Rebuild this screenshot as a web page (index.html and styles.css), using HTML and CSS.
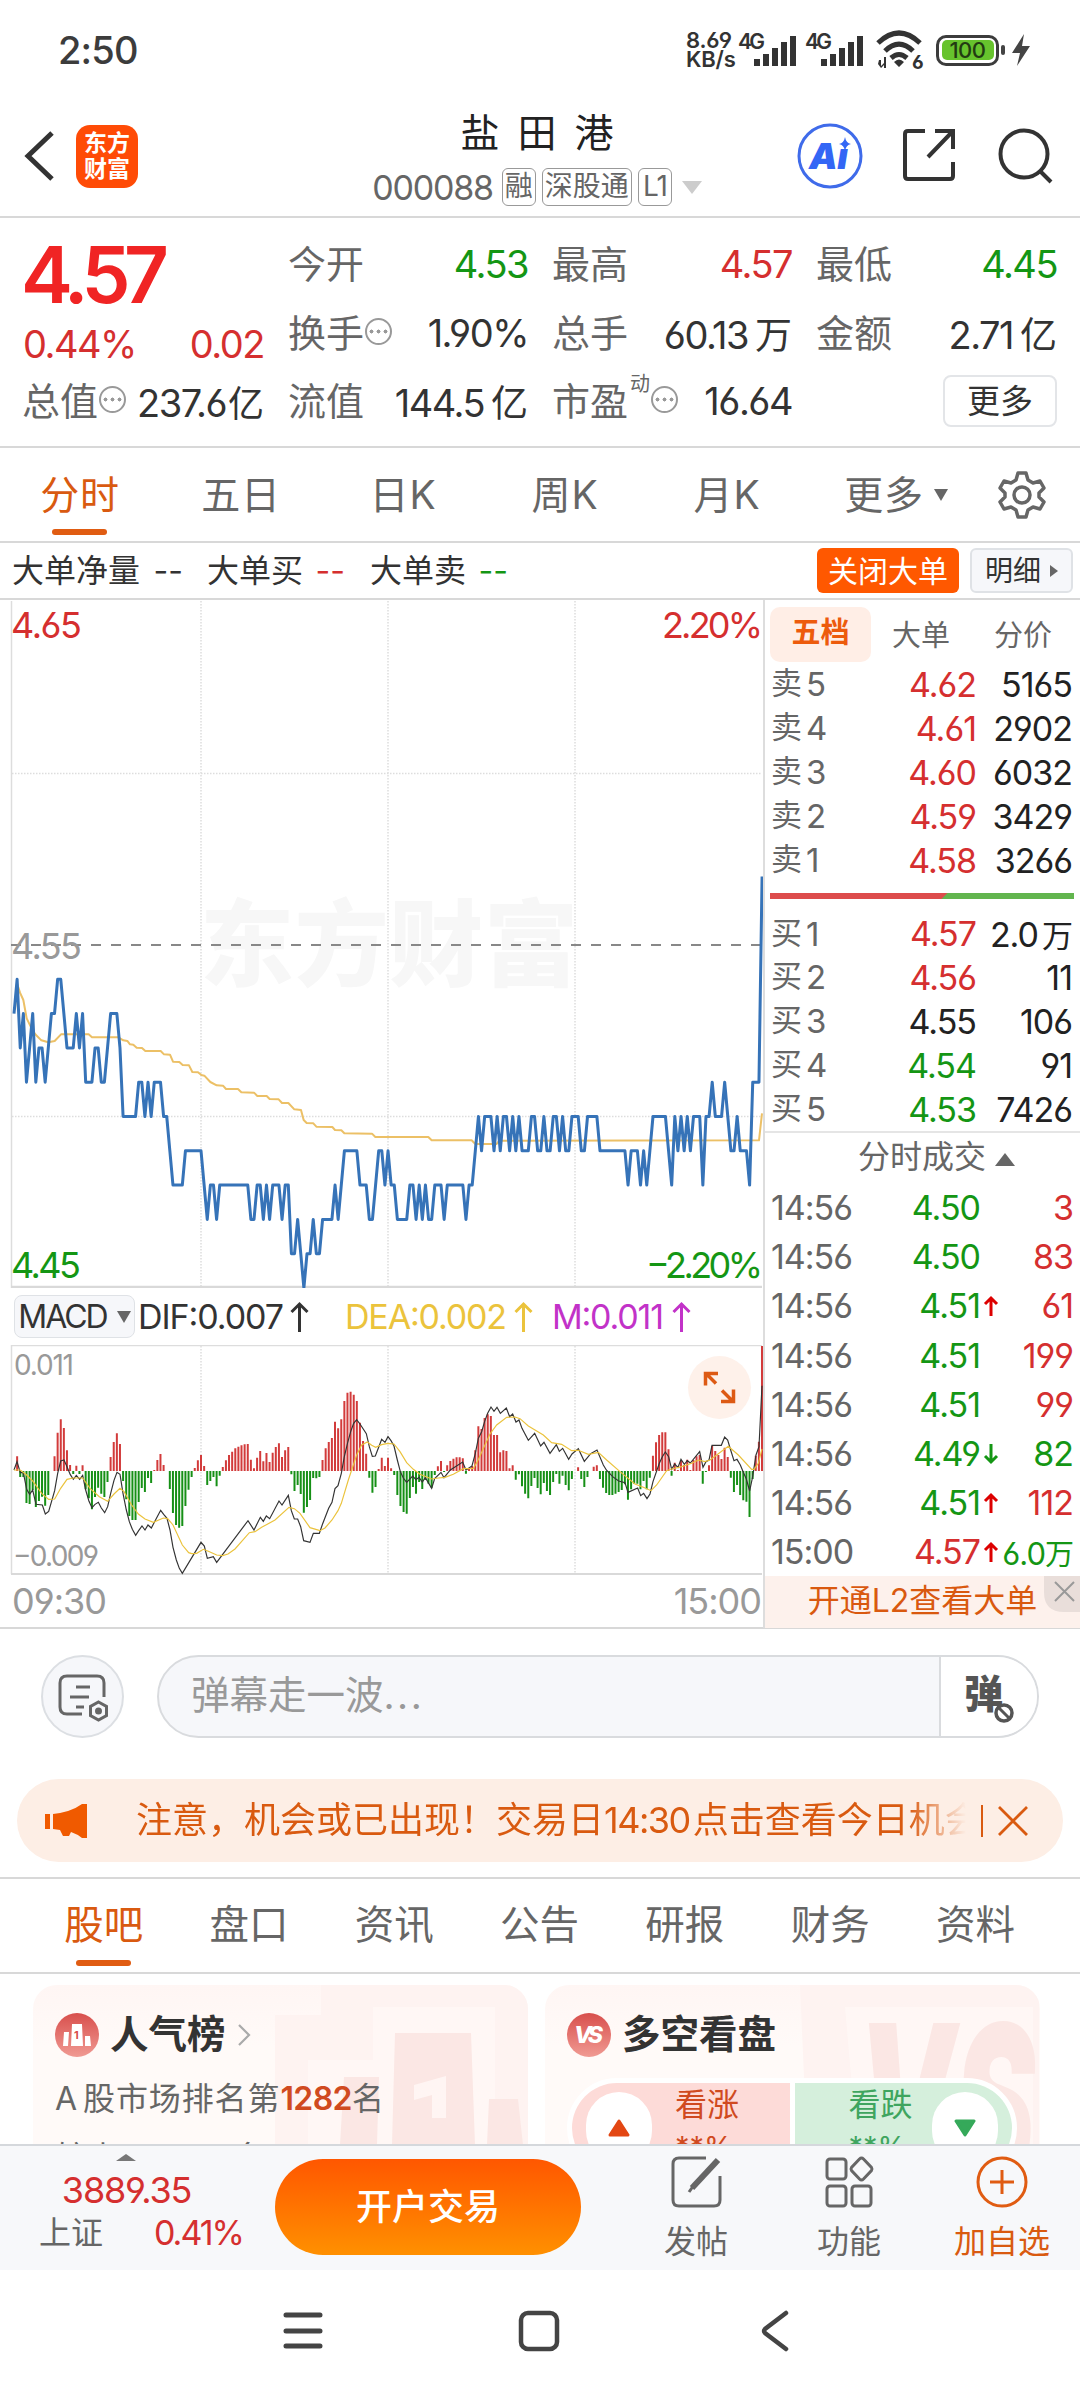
FILE: index.html
```html
<!DOCTYPE html>
<html lang="zh-CN">
<head>
<meta charset="utf-8">
<title>盐田港 000088</title>
<link rel="stylesheet" href="styles.css">
</head>
<body>
<div class="statusbar">
  <span class="clock">2:50</span>
  <div class="status-right">
    <span class="speed">8.69<br>KB/s</span>
    <svg width="62" height="42" viewBox="0 0 62 42"><text class="net" x="0" y="20" textLength="27">4G</text><path class="sig" d="M19 37v-7M28 37V25M37 37V19M46 37V13M55 37V7"/></svg>
    <svg width="64" height="42" viewBox="0 0 64 42"><text class="net" x="5" y="20" textLength="27">4G</text><path class="sig" d="M24 37v-7M33 37V25M42 37V19M51 37V13M60 37V7"/></svg>
    <svg class="wifi" width="50" height="42" viewBox="0 0 50 42"><path d="M3 14Q24-6 45 14M10 22Q24 8 38 22M16 29Q24 22 32 29" fill="none" stroke="#333" stroke-width="5"/><path d="M24 38l-5-5q5-5 10 0zM4 31h2v6l3-3v-6h2v11H9v-3l-3 3-3-4z" fill="#333"/><text class="six" x="37" y="40">6</text></svg>
    <span class="battery"><i>100</i></span><i class="bat-tip"></i>
    <svg class="bolt" width="18" height="32" viewBox="0 0 18 32"><path d="M12 0L0 19h8L5 32 18 12h-8z" fill="#444"/></svg>
  </div>
</div>

<header class="header">
  <svg class="back" width="32" height="52" viewBox="0 0 32 52"><path d="M28 3L4 26l24 23" fill="none" stroke="#333" stroke-width="5"/></svg>
  <div class="logo">东方<br>财富</div>
  <div class="title">
    <h1>盐 田 港</h1>
    <div class="code"><span>000088</span><b>融</b><b class="wide">深股通</b><b class="l1">L1</b><i class="tri"></i></div>
  </div>
  <svg class="ai" width="66" height="66" viewBox="0 0 66 66"><circle cx="33" cy="33" r="31" fill="#fff" stroke="#3f6bea" stroke-width="3"/><text x="12" y="46" textLength="39" class="ai-t">Aı</text><path d="M48 14q1 6 6 7-5 1-6 7-1-6-6-7 5-1 6-7z" fill="#3366f5"/></svg>
  <svg class="share" width="54" height="54" viewBox="0 0 54 54" fill="none" stroke="#333" stroke-width="4"><path d="M23 3H6Q3 3 3 6v42q0 3 3 3h42q3 0 3-3V34M33 3h18v18M51 3L26 29"/></svg>
  <svg class="search" width="56" height="56" viewBox="0 0 56 56" fill="none" stroke="#333" stroke-width="4"><circle cx="26" cy="26" r="23.500"/><path d="M42 43l11 11"/></svg>
</header>

<section class="quote">
  <div class="main-price"><strong>4.57</strong><div><span>0.44%</span><span>0.02</span></div></div>
  <div class="cell"><label>今开</label><span class="green">4.53</span></div>
  <div class="cell"><label>最高</label><span class="red">4.57</span></div>
  <div class="cell"><label>最低</label><span class="green">4.45</span></div>
  <div class="cell"><label>换手<i class="info"></i></label><span>1.90%</span></div>
  <div class="cell"><label>总手</label><span>60.13<em>万</em></span></div>
  <div class="cell"><label>金额</label><span>2.71<em>亿</em></span></div>
  <div class="cell"><label>总值<i class="info"></i></label><span>237.6<em class="tight">亿</em></span></div>
  <div class="cell"><label>流值</label><span>144.5<em>亿</em></span></div>
  <div class="cell"><label>市盈<sup>动</sup><i class="info"></i></label><span>16.64</span></div>
  <div class="cell end"><button class="more">更多</button></div>
</section>

<nav class="periods">
  <a class="on">分时</a><a>五日</a><a>日K</a><a>周K</a><a>月K</a><a class="drop">更多<i></i></a>
  <svg width="52" height="52" viewBox="0 0 52 52" fill="none" stroke="#666" stroke-width="3.500" stroke-linejoin="round"><path d="M22 4h8l2 7 5 3 7-2 4 7-5 5v4l5 5-4 7-7-2-5 3-2 7h-8l-2-7-5-3-7 2-4-7 5-5v-4l-5-5 4-7 7 2 5-3z"/><circle cx="26" cy="26" r="8"/></svg>
</nav>

<div class="orders">
  <span class="o1">大单净量 <i>--</i></span><span class="o2">大单买 <i class="red">--</i></span><span class="o3">大单卖 <i class="green">--</i></span>
  <button class="close-big">关闭大单</button><button class="detail">明细<i></i></button>
</div>

<main class="market">
  <div class="charts">
    <svg class="price-chart" width="763" height="688" viewBox="0 600 763 688">
      <text class="wm" x="200" y="979" textLength="378">东方财富</text>
      <path class="dots" d="M201 601V1287M388 601V1287M575 601V1287M12 773.500H762M12 1116.500H762"/>
      <path class="axis" d="M11.500 601V1288"/><path class="base" d="M11 1287H762"/>
      <path class="mid" d="M11 945H762"/>
      <text class="lab red-f" x="11" y="638" textLength="71">4.65</text><text class="lab red-f" x="662" y="638" textLength="101">2.20%</text>
      <text class="lab gray-f" x="11" y="959" textLength="71">4.55</text>
      <text class="lab green-f" x="11" y="1278" textLength="70">4.45</text><text class="lab green-f" x="646" y="1278" textLength="117">−2.20%</text>
      <g transform="translate(0 940) scale(.33333)"><polyline id="avg" class="avg"/></g>
      <g transform="translate(14 945) scale(3.117 34.3)"><polyline id="price" class="price"/></g>
    </svg>
    <div class="macd-row">
      <button class="macd">MACD<i></i></button>
      <svg width="620" height="57" viewBox="138 1288 620 57"><text class="ind" x="138" y="1329" textLength="146">DIF:0.007</text><text class="ind y-f" x="345" y="1329" textLength="162">DEA:0.002</text><text class="ind m-f" x="552" y="1329" textLength="112">M:0.011</text><g fill="none" stroke-width="3"><path stroke="#333" d="M299.500 1332v-28m-8 8l8-8 8 8"/><path stroke="#ebc33c" d="M523.500 1332v-28m-8 8l8-8 8 8"/><path stroke="#c232c8" d="M681.500 1332v-28m-8 8l8-8 8 8"/></g></svg>
    </div>
    <svg class="macd-chart" width="763" height="230" viewBox="0 1345 763 230">
      <path class="dots" d="M201 1346V1574M388 1346V1574M575 1346V1574"/>
      <path class="axis" d="M11.500 1345V1574M11 1345.500H762"/><path class="base thin" d="M11 1574H762"/>
      <text class="sm" x="14" y="1375" textLength="60">0.011</text><text class="sm" x="13" y="1566" textLength="86">−0.009</text>
      <g transform="translate(0 1280) scale(.33333)"><path id="up" class="bar up"/><path id="down" class="bar down"/><polyline id="dif" class="dif"/><polyline id="dea" class="dea"/></g>
      <circle cx="719.500" cy="1387.500" r="31.500" fill="#fef1ea"/>
      <path d="M716 1384l-10-10M718 1374h-12.500v12M722 1391l11 11M721 1402h12.500v-12" transform="translate(0 -.5)" fill="none" stroke="#dd5a14" stroke-width="3.500"/>
    </svg>
    <div class="times"><span>09:30</span><span>15:00</span></div>
  </div>
  <aside class="book">
    <div class="book-tabs"><b>五档</b><span>大单</span><span>分价</span></div>
    <div class="lv"><label>卖<u>5</u></label><span class="red">4.62</span><span>5165</span></div>
    <div class="lv"><label>卖<u>4</u></label><span class="red">4.61</span><span>2902</span></div>
    <div class="lv"><label>卖<u>3</u></label><span class="red">4.60</span><span>6032</span></div>
    <div class="lv"><label>卖<u>2</u></label><span class="red">4.59</span><span>3429</span></div>
    <div class="lv"><label>卖<u>1</u></label><span class="red">4.58</span><span>3266</span></div>
    <div class="ratio"></div>
    <div class="lv"><label>买<u>1</u></label><span class="red">4.57</span><span>2.0<em>万</em></span></div>
    <div class="lv"><label>买<u>2</u></label><span class="red">4.56</span><span>11</span></div>
    <div class="lv"><label>买<u>3</u></label><span>4.55</span><span>106</span></div>
    <div class="lv"><label>买<u>4</u></label><span class="green">4.54</span><span>91</span></div>
    <div class="lv"><label>买<u>5</u></label><span class="green">4.53</span><span>7426</span></div>
    <div class="deal-head">分时成交<i></i></div>
    <div class="deal"><time>14:56</time><span class="green">4.50</span><i></i><span class="red">3</span></div>
    <div class="deal"><time>14:56</time><span class="green">4.50</span><i></i><span class="red">83</span></div>
    <div class="deal"><time>14:56</time><span class="green">4.51</span><svg class="arr" viewBox="0 0 16 22"><path d="M8 21V3M2 9l6-6 6 6"/></svg><span class="red">61</span></div>
    <div class="deal"><time>14:56</time><span class="green">4.51</span><i></i><span class="red">199</span></div>
    <div class="deal"><time>14:56</time><span class="green">4.51</span><i></i><span class="red">99</span></div>
    <div class="deal"><time>14:56</time><span class="green">4.49</span><svg class="arr dn" viewBox="0 0 16 22"><path d="M8 1v18M2 13l6 6 6-6"/></svg><span class="green">82</span></div>
    <div class="deal"><time>14:56</time><span class="green">4.51</span><svg class="arr" viewBox="0 0 16 22"><path d="M8 21V3M2 9l6-6 6 6"/></svg><span class="red">112</span></div>
    <div class="deal"><time>15:00</time><span class="red">4.57</span><svg class="arr" viewBox="0 0 16 22"><path d="M8 21V3M2 9l6-6 6 6"/></svg><span class="green last">6.0<em>万</em></span></div>
    <div class="l2"><span>开通L2查看大单</span><svg width="36" height="36" viewBox="0 0 36 36"><path d="M0 0h36v36H20Q0 36 0 16z" fill="#e9deda"/><path d="M11 6l19 19M30 6L11 25" stroke="#999" stroke-width="2"/></svg></div>
  </aside>
</main>

<div class="danmu">
  <div class="round"><svg width="54" height="52" viewBox="0 0 54 52" fill="none" stroke="#666" stroke-width="3"><path d="M26 41H11q-7 0-7-7V10q0-7 7-7h30q7 0 7 7v14M20 14h14M14 24h19M20 34h8"/><path d="M42.500 29l8 4.500v9l-8 4.500-8-4.500v-9z"/><circle cx="42.500" cy="38" r="2" fill="#666"/></svg></div>
  <div class="field"><span>弹幕走一波<u>...</u></span><div class="off"><b>弹</b><svg width="22" height="22" viewBox="0 0 22 22"><circle cx="11" cy="11" r="8" fill="#fff" stroke="#555" stroke-width="3.500"/><path d="M6 6l10 10" stroke="#555" stroke-width="3"/></svg></div></div>
</div>

<div class="notice">
  <svg class="horn" width="44" height="38" viewBox="0 0 44 38"><path d="M0 12h5v15H0zM8 12Q26 10 37 2h5v34h-5q-5-4-11-6l-2 4h-6l-3-6-7-1z" fill="#f05a00"/></svg>
  <div class="msg">注意，机会或已出现！交易日<u>14:30</u>点击查看今日机会</div>
  <i class="sep"></i>
  <svg width="32" height="30" viewBox="0 0 32 30"><path d="M2 1l28 28M30 1L2 29" stroke="#d95a10" stroke-width="2.800"/></svg>
</div>

<nav class="tabs"><a class="on">股吧</a><a>盘口</a><a>资讯</a><a>公告</a><a>研报</a><a>财务</a><a>资料</a></nav>

<div class="cards">
  <div class="card">
    <svg class="art" width="495" height="160" viewBox="0 0 495 160"><path d="M242 30h46V0h207v160H242z" fill="#fef3f1"/><path d="M340 22h122v138H340zM275 75h65v85h-65z" fill="#fffaf8" opacity=".55"/><path d="M362 48h76l4 112h-83zM311 92h35l-2 68h-37zM456 114h29l5 46h-36z" fill="#fbe7e4"/><path d="M381 100l32-9v42h-14v-23l-18 5z" fill="#fff5f3"/></svg>
    <div class="card-h"><svg width="44" height="44" viewBox="0 0 44 44"><circle cx="22" cy="22" r="22" fill="url(#g)"/><path d="M17 11h10l1 22H16zM9 19h5l-1 14H8zM30 23h5l1 10h-6z" fill="#fff"/><text x="19" y="26" class="one">1</text><defs><linearGradient id="g" x2="0" y2="1"><stop stop-color="#d84f4c"/><stop offset="1" stop-color="#f09a93"/></linearGradient></defs></svg><b>人气榜</b><svg width="14" height="22" viewBox="0 0 14 22"><path d="M2 1l10 10L2 21" fill="none" stroke="#aaa" stroke-width="2.200"/></svg></div>
    <p><u>A</u>股市场排名第<strong>1282</strong>名</p>
    <p>较上日<strong>↑188</strong>名</p>
  </div>
  <div class="card vs">
    <svg class="art" width="494" height="160" viewBox="0 0 494 160"><path d="M255 0h239v160H262z" fill="#fef3f1"/><path d="M300 22h188v138H312z" fill="#fffaf8" opacity=".6"/><text x="312" y="200" textLength="178" lengthAdjust="spacingAndGlyphs" class="bigvs">VS</text></svg>
    <div class="card-h"><svg width="44" height="44" viewBox="0 0 44 44"><circle cx="22" cy="22" r="22" fill="url(#g)"/><text x="7" y="30" textLength="29" class="vst">VS</text></svg><b>多空看盘</b></div>
    <div class="vote">
      <div class="bull"><i><svg width="22" height="18" viewBox="0 0 22 18"><path d="M11 2l9 14H2z" fill="#e34713" stroke="#e34713" stroke-width="3" stroke-linejoin="round"/></svg></i><span>看涨<small>**%</small></span></div>
      <div class="bear"><span>看跌<small>**%</small></span><i><svg width="22" height="18" viewBox="0 0 22 18"><path d="M11 16l9-14H2z" fill="#35a95a" stroke="#35a95a" stroke-width="3" stroke-linejoin="round"/></svg></i></div>
    </div>
  </div>
</div>

<footer class="bottom">
  <div class="index"><i></i><b>3889.35</b><div><span>上证</span><em>0.41%</em></div></div>
  <button class="open">开户交易</button>
  <a><svg width="52" height="54" viewBox="0 0 52 54" fill="none" stroke="#666" stroke-width="3"><path d="M36 3H9Q3 3 3 9v36q0 6 6 6h35q6 0 6-6V21"/><path d="M22 33L48 5" stroke-width="6"/><path d="M19 37l5-7" stroke-width="3"/></svg>发帖</a>
  <a><svg width="52" height="54" viewBox="0 0 52 54" fill="none" stroke="#666" stroke-width="3"><rect x="4" y="4" width="19" height="20" rx="3"/><rect x="4" y="31" width="19" height="20" rx="3"/><rect x="29" y="31" width="19" height="20" rx="3"/><path d="M38.500 3q1 0 2 1l8 8.500q1 1.500 0 3l-8 8.500q-2 2-4 0l-8-8.500q-1-1.500 0-3l8-8.500q1-1 2-1z"/></svg>功能</a>
  <a class="add"><svg width="54" height="54" viewBox="0 0 54 54" fill="none" stroke="#e05c12" stroke-width="3"><circle cx="27" cy="27" r="24"/><path d="M15 27h24M27 15v24"/></svg>加自选</a>
</footer>

<div class="sysnav">
  <svg width="40" height="40" viewBox="0 0 40 40"><path d="M3 4h34M3 20h34M3 35h34" stroke="#444" stroke-width="5" stroke-linecap="round"/></svg>
  <svg width="42" height="42" viewBox="0 0 42 42"><rect x="3" y="3" width="36" height="36" rx="7" fill="none" stroke="#444" stroke-width="4.500"/></svg>
  <svg width="28" height="42" viewBox="0 0 28 42"><path d="M25 3L4 19q-2 2 0 4l21 16" fill="none" stroke="#444" stroke-width="4.500" stroke-linecap="round"/></svg>
</div>
<script src="chart.js"></script>
</body>
</html>
```
FILE: styles.css
```css
* { box-sizing: border-box; }
body { margin: 0; width: 1080px; height: 2400px; overflow: hidden; background: #fff; color: #333; font-family: Inter, "Noto Sans CJK SC", sans-serif; font-feature-settings: "cv03", "cv04"; display: flex; flex-direction: column; }
i, em, u { font-style: normal; text-decoration: none; }
button { font: inherit; padding: 0; border: 0; background: none; color: inherit; white-space: nowrap; }
svg { display: block; flex: none; }
.red { color: #d52f2f; }
.green { color: #149614; }
.red-f { fill: #d52f2f; } .green-f { fill: #149614; } .gray-f { fill: #999; }

.statusbar { height: 100px; flex: none; display: flex; align-items: center; justify-content: space-between; padding: 0 50px 0 58px; }
.clock { font-size: 38px; font-weight: 500; color: #3c3c3c; letter-spacing: -.8px; }
.status-right { display: flex; align-items: center; }
.speed { font-size: 22px; line-height: 19px; font-weight: 600; width: 52px; letter-spacing: -.2px; }
.net { font-size: 21px; font-weight: 600; fill: #333; }
.sig { stroke: #333; stroke-width: 6; fill: none; }
.wifi { margin-left: 11px; margin-right: 11px; }
.six { font-size: 19px; font-weight: 700; fill: #333; }
.battery { width: 63px; height: 31px; border: 3.500px solid #3c3c3c; border-radius: 10px; padding: 2.500px; }
.battery i { display: block; height: 100%; border-radius: 5px; background: #67c32d; font-size: 22px; line-height: 20px; font-weight: 500; text-align: center; letter-spacing: -.5px; color: #223b12; }
.bat-tip { width: 4px; height: 10px; background: #444; border-radius: 2px; margin: 0 7px 0 2px; }

.header { height: 118px; flex: none; border-bottom: 2px solid #d8d8d8; display: flex; align-items: flex-start; padding: 24px 28px 0 24px; }
.back { margin: 6px 20px 0 0; }
.logo { width: 62px; height: 63px; margin-top: 1px; border-radius: 14px; background: #ff4b06; color: #fff; font-size: 23px; line-height: 26px; font-weight: 700; text-align: center; padding-top: 5px; }
.title { flex: 1; display: flex; flex-direction: column; align-items: center; padding-left: 139px; margin-top: -18px; white-space: nowrap; }
h1 { margin: 0; font-size: 39px; line-height: 54px; font-weight: 400; color: #222; word-spacing: 7px; }
.code { display: flex; align-items: center; margin-top: 7px; height: 40px; color: #666; }
.code span { font-size: 34px; letter-spacing: -1.200px; margin-right: 6px; }
.code b { font-weight: 400; font-size: 28px; line-height: 34px; height: 38px; border: 1.500px solid #999; border-radius: 6px; padding: 0 2px; margin: 0 3px; }
.code .wide { padding: 0 2px; }
.code .l1 { padding: 0 4px; letter-spacing: -1px; }
.tri { border: 10px solid transparent; border-top: 13px solid #ccc; border-bottom: 0; margin-left: 7px; }
.ai { margin: -1px 39px 0 0; }
.ai-t { font-size: 36px; font-weight: 900; font-style: italic; fill: #3366f5; }
.share { margin: 4px 42px 0 0; }
.search { margin: 4px -2px 0 0; }

.quote { height: 230px; flex: none; border-bottom: 2px solid #d8d8d8; display: grid; grid-template-columns: 241px 239px 239px 240px; column-gap: 25px; grid-template-rows: repeat(3, 68.500px); padding: 12px 23px 0; }
.main-price { grid-row: span 2; }
.main-price strong { display: block; font-size: 78px; line-height: 80px; font-weight: 600; color: #f02424; letter-spacing: -6.500px; margin: 5px 0 0 -2px; }
.main-price div { display: flex; justify-content: space-between; font-size: 38px; letter-spacing: -1.500px; line-height: 46px; color: #d52f2f; margin-top: 6px; }
.cell { display: flex; align-items: center; justify-content: space-between; font-size: 38px; letter-spacing: -1.500px; white-space: nowrap; }
.cell label { font-size: 38px; letter-spacing: 0; color: #666; display: flex; align-items: center; margin: -5px 0 0 -1px; }
.cell em { font-size: 37px; margin-left: 7px; letter-spacing: 0; }
.cell .tight { font-size: 36px; margin-left: 2px; }
.cell sup { font-size: 20px; align-self: flex-start; margin: -3px 0 0 2px; line-height: 32px; }
.info { width: 27px; height: 27px; border: 2px solid #999; border-radius: 50%; margin: 2px 0 0 1px; display: block; background: radial-gradient(circle, #999 1.800px, transparent 2.200px) 1px 8px / 7px 7px repeat-x; }
.end { justify-content: flex-end; }
.more { width: 114px; height: 52px; border: 2px solid #e3e5e8; border-radius: 8px; font-size: 33px; line-height: 46px; letter-spacing: 0; }

.periods { height: 95px; flex: none; border-bottom: 2px solid #d8d8d8; display: grid; grid-template-columns: 160px 162px 162px 162px 162px 188px 78px; align-items: center; font-size: 39px; letter-spacing: .8px; color: #666; }
.periods a { text-align: center; line-height: 94px; height: 93px; position: relative; }
.periods .on, .tabs .on { color: #d95a10; }
.on::after { content: ""; position: absolute; left: calc(50% - 28px); bottom: 6px; width: 55px; height: 6px; border-radius: 3px; background: #e05c12; }
.drop { display: flex; align-items: center; justify-content: center; gap: 10px; padding-right: 12px; }
.drop i { border: 7px solid transparent; border-top: 12px solid #666; border-bottom: 0; }

.orders { height: 57px; flex: none; border-bottom: 2px solid #d8d8d8; display: flex; align-items: center; padding: 0 7px 0 12px; font-size: 32px; white-space: nowrap; }
.orders span { display: flex; justify-content: space-between; line-height: 50px; }
.o1 { width: 171px; margin-right: 24px; } .o2 { width: 138px; margin-right: 25px; } .o3 { width: 138px; }
.close-big { margin-left: auto; width: 142px; height: 45px; border-radius: 6px; background: #ff5800; color: #fff; font-size: 30px; line-height: 42px; }
.detail { width: 103px; height: 45px; margin-left: 11px; border: 2px solid #dfe2e6; border-radius: 6px; background: #f6f7fa; font-size: 28px; line-height: 40px; display: flex; align-items: center; justify-content: center; gap: 9px; }
.detail i { border: 6px solid transparent; border-left: 8px solid #666; border-right: 0; }

.market { height: 1029px; flex: none; display: grid; grid-template-columns: 765px 315px; border-bottom: 2px solid #d8d8d8; }
.charts { border-right: 2px solid #ddd; }
.wm { font-size: 94px; font-weight: 900; fill: #f7f7f7; }
.dots { stroke: #ddd; stroke-width: 1.500; stroke-dasharray: 1.500 1.500; fill: none; }
.axis { stroke: #ddd; stroke-width: 1.500; fill: none; }
.base { stroke: #d9d9d9; stroke-width: 2.500; } .thin { stroke-width: 2; }
.mid { stroke: #888; stroke-width: 2; stroke-dasharray: 10 10; }
.lab { font-size: 36px; }
.sm { font-size: 28px; fill: #999; }
.price, .avg { fill: none; vector-effect: non-scaling-stroke; stroke-linejoin: round; }
.price { stroke: #3673b8; stroke-width: 3; }
.avg { stroke: #ecc066; stroke-width: 2; }
.macd-row { height: 57px; display: flex; align-items: center; padding-left: 14px; }
.macd { width: 121px; height: 43px; margin-right: 3px; border: 1.500px solid #dfe2e6; border-radius: 8px; background: #f6f7fa; font-size: 32px; letter-spacing: -2px; display: flex; align-items: center; justify-content: center; gap: 10px; }
.macd i { border: 7px solid transparent; border-top: 12px solid #666; border-bottom: 0; }
.ind { font-size: 34px; fill: #333; } .y-f { fill: #ebc33c; } .m-f { fill: #c232c8; }
.bar { fill: none; stroke-width: 6; } .up { stroke: #d23b3b; } .down { stroke: #169016; }
.dif, .dea { fill: none; stroke-width: 3.500; } .dif { stroke: #333; } .dea { stroke: #ebc33c; }
.times { display: flex; justify-content: space-between; padding: 0 2px 0 12px; color: #999; font-size: 36px; line-height: 53px; letter-spacing: -1px; }

.book { padding: 7px 0 0 5px; font-size: 34px; position: relative; }
.book-tabs { display: flex; align-items: center; height: 55px; font-size: 29px; color: #666; }
.book-tabs b { width: 101px; height: 55px; flex: none; line-height: 51px; border-radius: 10px; background: #ffeee6; color: #ed5b0c; text-align: center; margin-right: 21px; }
.book-tabs span { width: 102px; flex: none; margin-top: -4px; }
.lv { height: 44px; display: grid; grid-template-columns: 105px 101px 96px; align-items: center; white-space: nowrap; color: #222; letter-spacing: -1px; }
.lv span { text-align: right; }
.lv label { font-size: 31px; color: #666; padding-left: 1px; display: flex; align-items: center; gap: 5px; line-height: 40px; margin-top: -2px; }
.lv u { font-size: 33px; margin-top: 2px; }
.lv em { font-size: 31px; margin-left: 4px; }
.lv .red { color: #d52f2f; } .lv .green { color: #149614; }
.ratio { height: 6px; width: 304px; margin: 11px 0 12px; background: linear-gradient(135deg, #dd4c4c 125px, #62b54e 126px); }
.deal-head { height: 52px; margin: 0 0 0 -5px; border-top: 2px solid #e5e5e5; font-size: 32px; line-height: 44px; color: #666; display: flex; align-items: center; justify-content: center; gap: 9px; padding: 0 0 2px 28px; }
.deal-head i { border: 10px solid transparent; border-bottom: 13px solid #666; border-top: 0; margin-bottom: -4px; }
.deal { height: 49.200px; display: grid; grid-template-columns: 105px 105px 23px 70px; align-items: center; letter-spacing: -1px; white-space: nowrap; }
.deal time { color: #666; padding-left: 1px; }
.deal span { text-align: right; }
.deal .last { font-size: 31px; margin-left: -20px; } .deal em { font-size: 29px; }
.arr { width: 16px; height: 22px; margin-left: 3px; fill: none; stroke: #d00; stroke-width: 3; }
.dn { stroke: #149614; }
.l2 { position: absolute; left: 0; right: 0; bottom: 0; height: 52px; background: #fdf1ec; color: #d9590f; font-size: 32px; line-height: 49px; text-align: center; }
.l2 svg { position: absolute; right: 0; top: 0; }

.danmu { height: 148px; flex: none; display: flex; align-items: flex-start; padding: 26px 41px 0; gap: 33px; }
.round { width: 83px; height: 83px; border-radius: 50%; border: 2px solid #dcdfe3; background: #f6f7fa; display: flex; align-items: center; justify-content: center; padding-top: 4px; }
.field { width: 882px; height: 83px; border-radius: 42px; border: 2px solid #d9dbde; background: #f6f7fa; overflow: hidden; display: flex; justify-content: space-between; font-size: 38.500px; line-height: 77px; color: #999; padding-left: 32px; }
.field u { letter-spacing: 2.500px; }
.off { width: 98px; border-left: 2px solid #d9dbde; background: #fff; position: relative; color: #555; padding-left: 23px; font-size: 39px; line-height: 73px; }
.off b { font-weight: 900; }
.off svg { position: absolute; left: 52px; top: 45px; }

.notice { height: 83px; flex: none; margin: 2px 17px 15px; border-radius: 42px; background: #fdeee5; display: flex; align-items: center; padding: 0 33px 0 28px; color: #d95a10; }
.horn { margin-right: 47px; }
.msg { width: 835px; overflow: hidden; white-space: nowrap; font-size: 36px; line-height: 81px; -webkit-mask-image: linear-gradient(90deg, #000 772px, transparent 830px); }
.msg u { letter-spacing: -1.500px; margin-right: 3px; }
.sep { width: 2px; height: 32px; background: #d95a10; margin: 0 14px 0 10px; }

.tabs { height: 97px; flex: none; border-top: 2px solid #d8d8d8; border-bottom: 2px solid #d8d8d8; display: grid; grid-template-columns: repeat(7, 145.300px); padding-left: 31px; font-size: 39.500px; line-height: 93px; color: #666; text-align: center; }
.tabs a { position: relative; height: 93px; }

.cards { height: 170px; flex: none; overflow: hidden; padding: 11px 33px 0; display: flex; gap: 17px; }
.card { width: 495px; height: 260px; border-radius: 24px; background: linear-gradient(#fff6f4, #fffaf8 60px); overflow: hidden; position: relative; padding: 28px 22px; flex: none; }
.art { position: absolute; left: 0; top: 0; }
.card-h { position: relative; display: flex; align-items: center; gap: 11px; height: 44px; font-size: 38.500px; }
.card-h b { font-weight: 700; line-height: 44px; margin-top: -3px; }
.one { font-size: 11px; font-weight: 700; fill: #d84f4c; }
.card p { position: relative; margin: 19px 0 0; font-size: 32px; line-height: 46px; color: #666; letter-spacing: .9px; }
.card p u { margin-right: 5px; }
.card p strong { font-weight: 600; color: #d04a20; letter-spacing: -.6px; }
.card p + p { margin-top: 13px; }
.vst { font-size: 23px; font-weight: 800; font-style: italic; fill: #fff; }
.bigvs { font-size: 222px; font-weight: 900; font-style: italic; fill: #fbe7e4; }
.vote { position: absolute; left: 22px; top: 93px; width: 450px; height: 100px; border: 5px solid #fff; border-radius: 50px; display: flex; overflow: hidden; background: #fff; gap: 5px; font-size: 32px; line-height: 44px; }
.vote div { display: flex; width: 220px; position: relative; }
.vote small { display: block; font-size: 29px; line-height: 40px; }
.bull { background: #fddbd8; color: #d04a20; } .bear { background: #d5efdc; color: #3fa55f; }
.vote i { position: absolute; top: 9px; width: 66px; height: 72px; border-radius: 36px; background: #fff; display: flex; align-items: center; justify-content: center; }
.bull i { left: 14px; } .bear i { right: 14px; }
.bull span { margin-left: 103px; } .bear span { margin-left: 54px; }

.bottom { height: 126px; flex: none; border-top: 2px solid #d5d8dc; background: #f7f8fa; display: flex; color: #666; font-size: 32px; }
.index { width: 240px; margin-right: 35px; display: flex; flex-direction: column; align-items: center; flex: none; }
.index > i { border: 10px solid transparent; border-bottom: 7px solid #777; border-top: 0; margin: 8px 0 0 12px; }
.index b { font-weight: 400; font-size: 36px; line-height: 40px; letter-spacing: -1.200px; color: #d52f2f; margin: 9px 0 0 13px; }
.index div { display: flex; gap: 51px; line-height: 46px; margin-left: 39px; font-size: 32px; align-self: flex-start; white-space: nowrap; }
.index em { font-size: 34px; letter-spacing: -2px; color: #d52f2f; }
.open { width: 306px; height: 96px; margin: 13px 47px 0 0; border-radius: 48px; background: linear-gradient(#ff5700, #ff9000); color: #fff; font-size: 36px; font-weight: 500; line-height: 92px; }
.bottom a { width: 136px; display: flex; flex-direction: column; align-items: center; line-height: 46px; gap: 10px; padding-top: 9px; margin-right: 17px; }
.bottom .add { color: #d95a10; margin: 0; }

.sysnav { height: 130px; flex: none; display: flex; align-items: center; padding: 0 0 8px 283px; }
.sysnav svg:nth-child(2) { margin: 0 201px 0 195px; }
```
FILE: chart.js
```js
// Minute prices as [minute, cents below the previous close] turning points.
const price = "0,2 1,1 2,3 3,2 4,4 6,2 7,4 8,3 9,3 10,4 12,2 13,2 14,1 15,1 17,3 19,3 20,2 21,3 22,2 23,4 25,4 26,3 27,3 28,4 29,4 31,2 33,2 34,3 35,5 39,5 40,4 41,4 42,5 43,4 44,5 45,4 47,4 48,5 49,5 50,6 51,7 54,7 55,6 60,6 61,7 62,8 63,7 64,7 65,8 66,7 75,7 76,8 77,8 78,7 79,7 80,8 81,7 82,8 83,7 85,7 86,8 87,7 88,7 89,9 90,9 91,8 92,9 93,10 94,9 95,9 96,8 97,9 98,9 99,8 102,8 103,7 104,8 105,7 106,6 110,6 111,7 113,7 114,8 115,8 116,7 117,6 118,6 119,7 120,6 121,7 122,7 123,8 126,8 127,7 128,7 129,8 130,7 131,8 132,7 133,8 134,8 135,7 137,7 138,8 139,7 144,7 145,8 146,7 147,7 148,6 149,5 150,6 151,5 153,5 154,6 155,5 156,6 157,5 158,5 159,6 160,5 161,6 162,5 163,6 165,6 166,5 167,5 168,6 169,6 170,5 171,6 172,6 173,5 174,5 175,6 176,5 177,6 178,6 179,5 181,5 182,6 183,6 184,5 187,5 188,6 196,6 197,7 198,6 200,6 201,7 202,6 203,7 204,6 205,5 209,5 210,6 211,7 212,5 213,6 214,5 215,6 216,5 217,6 218,5 220,5 221,7 222,5 223,5 224,4 225,5 227,5 228,4 229,5 230,6 231,6 232,5 233,6 235,6 236,7 237,4 239,4 240,-2";

const avg = "45,210 51,130 60,158 70,180 80,235 98,272 108,285 124,301 145,307 164,303 183,283 266,283 276,292 355,292 370,301 382,303 390,313 400,314 410,323 426,324 436,333 482,333 492,343 510,344 519,365 538,366 548,375 567,376 577,396 594,397 604,405 613,407 631,426 650,436 669,437 678,447 714,447 724,457 762,458 772,468 800,468 809,477 836,478 846,489 865,489 883,508 903,510 911,540 920,549 940,550 949,560 997,561 1005,570 1024,571 1033,580 1116,581 1126,591 1285,591 1295,601 1415,601 1426,612 1490,612 1498,602 2277,601 2286,520";

// MACD histogram, one value per minute.
const hist = [0,44,-18,-18,-96,-99,-57,-108,-90,-77,-104,-72,0,44,115,155,129,62,18,-9,16,-9,17,-55,-82,-115,-78,-50,-68,-78,-33,42,87,113,81,-30,-85,-135,-147,-147,-93,-51,-63,-21,-36,3,33,51,18,0,-54,-126,-162,-170,-165,-105,-56,-18,9,32,48,15,-42,-30,-18,-46,-14,12,32,48,58,68,73,77,80,81,34,8,40,60,29,54,27,55,72,83,42,62,72,-10,-60,-42,-69,-125,-108,-87,-21,-22,-18,33,68,87,99,148,128,155,210,235,238,229,210,145,90,52,-20,-65,-48,6,40,15,40,8,-12,-72,-105,-123,-128,-81,-48,-68,-33,-54,-27,-38,-50,-12,14,30,-3,17,30,37,41,41,38,-8,8,15,62,134,126,159,170,165,108,108,56,62,60,8,17,-26,-10,-46,-68,-82,-45,-21,-51,-70,-36,-60,-72,-33,-9,-38,-14,-42,-58,-24,0,11,-24,-48,-18,0,13,17,-24,-50,-66,-72,-72,-68,-63,-57,-40,-86,-55,-38,-38,-55,-30,-55,-20,46,86,108,116,116,65,-14,25,3,33,18,34,3,33,44,48,-38,-3,17,75,60,48,36,70,42,-20,-63,-42,-72,-88,-92,-138,-24,46,88,375];

const dif = "42,570 51,545 61,578 70,578 80,628 89,643 98,630 108,673 127,675 136,702 146,694 164,632 173,580 182,543 192,540 201,560 211,584 220,598 229,586 239,598 248,586 257,630 267,664 276,683 285,673 295,667 304,684 314,698 323,680 332,640 342,601 351,577 360,583 369,640 379,690 388,725 397,748 407,766 416,752 426,738 435,750 444,735 454,744 463,727 482,691 491,703 501,715 510,750 519,802 529,840 538,865 547,880 603,787 613,798 622,835 640,830 650,847 744,722 762,750 781,712 790,724 799,708 809,716 837,663 846,675 865,646 874,692 883,717 893,717 902,740 911,782 930,787 940,760 958,760 968,731 986,685 996,667 1005,626 1014,617 1024,580 1033,530 1043,488 1052,455 1061,430 1070,419 1080,432 1099,461 1108,500 1117,529 1126,528 1136,502 1145,478 1155,487 1164,470 1173,482 1182,498 1192,540 1201,575 1210,594 1220,607 1238,588 1248,599 1257,592 1267,606 1276,593 1295,625 1304,596 1323,577 1332,593 1351,570 1388,546 1398,570 1416,558 1426,520 1435,475 1445,455 1454,424 1463,400 1473,381 1482,394 1491,382 1501,400 1519,384 1529,410 1538,402 1548,426 1557,420 1566,445 1585,481 1604,460 1622,498 1632,487 1650,520 1669,494 1678,514 1688,505 1706,538 1716,522 1735,506 1753,544 1772,521 1791,510 1810,555 1819,570 1838,590 1856,603 1875,608 1884,637 1913,624 1922,647 1931,640 1941,656 1950,642 1959,605 1978,550 1987,530 1996,516 2006,530 2015,568 2024,552 2034,562 2043,538 2053,553 2062,542 2071,549 2099,515 2109,562 2118,545 2127,540 2136,496 2164,496 2174,471 2183,480 2192,510 2202,542 2211,538 2221,555 2230,577 2239,597 2249,633 2258,590 2268,525 2277,500 2286,317";

const dea = "42,570 61,570 80,585 98,603 125,640 146,658 164,657 182,625 201,598 220,594 248,594 270,625 298,650 323,664 342,642 360,625 372,635 395,675 415,702 435,717 460,727 490,714 503,716 519,735 547,795 566,818 575,821 590,820 610,808 625,814 650,825 668,827 684,822 705,807 748,758 765,755 785,742 825,720 867,682 883,686 900,700 930,743 960,752 975,744 996,720 1014,692 1024,670 1045,600 1070,525 1085,495 1102,486 1115,496 1127,502 1145,494 1164,490 1182,492 1200,515 1220,548 1240,568 1260,583 1295,597 1315,594 1335,592 1360,583 1390,566 1420,565 1432,545 1470,462 1490,435 1520,412 1545,411 1560,416 1585,438 1600,447 1630,465 1655,488 1685,493 1715,512 1735,511 1765,523 1795,517 1820,540 1860,575 1905,612 1930,622 1953,632 1970,615 2000,572 2015,567 2045,560 2075,550 2095,540 2115,545 2130,540 2185,499 2215,525 2255,568 2262,568 2275,550 2286,507";

const byId = id => document.getElementById(id);
byId("price").setAttribute("points", price);
byId("avg").setAttribute("points", avg);
byId("dif").setAttribute("points", dif);
byId("dea").setAttribute("points", dea);

const bars = keep => hist.map((v, i) => keep(v) ? `M${(42 + 9.35 * i).toFixed(1)} 573v${-v}` : "").join("");
byId("up").setAttribute("d", bars(v => v > 0));
byId("down").setAttribute("d", bars(v => v < 0));
```
